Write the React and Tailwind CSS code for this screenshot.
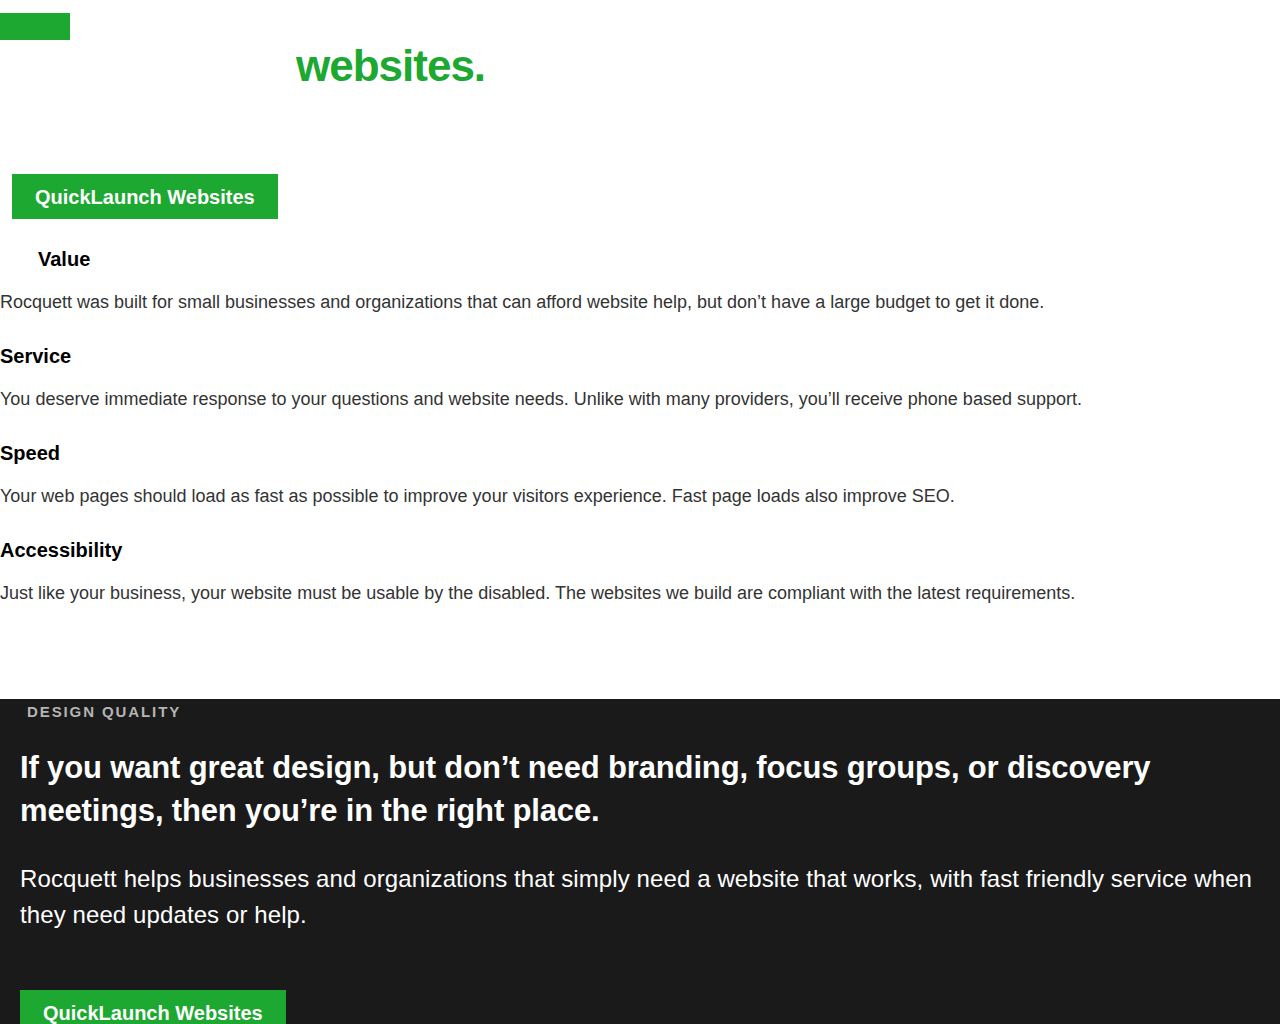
export default function App() {
  const font = { fontFamily: '"Liberation Sans", Arial, sans-serif' };
  const sections = [
    { t: 'Service', p: 'You deserve immediate response to your questions and website needs. Unlike with many providers, you’ll receive phone based support.' },
    { t: 'Speed', p: 'Your web pages should load as fast as possible to improve your visitors experience. Fast page loads also improve SEO.' },
    { t: 'Accessibility', p: 'Just like your business, your website must be usable by the disabled. The websites we build are compliant with the latest requirements.' },
  ];
  return (
    <div style={font} className="bg-white min-h-[1024px] text-[#333]">
      <div className="pt-[13px]">
        <div className="w-[70px] h-[27px] bg-[#1ca831]" />
      </div>
      <div className="pl-[296px]">
        <h1 className="text-[44px] leading-[52px] font-bold text-[#1ca831] tracking-[-1px]">websites.</h1>
      </div>
      <div className="pl-[12px] pt-[82px]">
        <a className="inline-flex items-center h-[45px] px-[23px] bg-[#1ca831] text-white text-[20px] font-bold">QuickLaunch Websites</a>
      </div>
      <div className="pl-[38px] pt-[28px]">
        <h3 className="text-[20px] leading-[24px] font-bold text-black">Value</h3>
      </div>
      <p className="text-[18px] leading-[24px] mt-[19px]">Rocquett was built for small businesses and organizations that can afford website help, but don’t have a large budget to get it done.</p>
      {sections.map((s) => (
        <div key={s.t}>
          <h3 className="text-[20px] leading-[24px] font-bold text-black mt-[30px]">{s.t}</h3>
          <p className="text-[18px] leading-[24px] mt-[19px]">{s.p}</p>
        </div>
      ))}
      <div className="mt-[94px] bg-[#1a1a1a] text-white pb-[40px]">
        <div className="pl-[27px] pt-[4px] text-[15px] leading-[18px] font-bold tracking-[1.9px] text-[#b4b4b4]">DESIGN QUALITY</div>
        <div className="px-[20px]">
          <h2 className="mt-[25px] text-[31px] leading-[43px] font-bold tracking-[-0.15px]">If you want great design, but don’t need branding, focus groups, or discovery meetings, then you’re in the right place.</h2>
          <p className="mt-[29px] text-[24px] leading-[36px] tracking-[0.1px]">Rocquett helps businesses and organizations that simply need a website that works, with fast friendly service when they need updates or help.</p>
          <a className="mt-[57px] inline-flex items-center h-[45px] px-[23px] bg-[#1ca831] text-white text-[20px] font-bold">QuickLaunch Websites</a>
        </div>
      </div>
    </div>
  );
}
